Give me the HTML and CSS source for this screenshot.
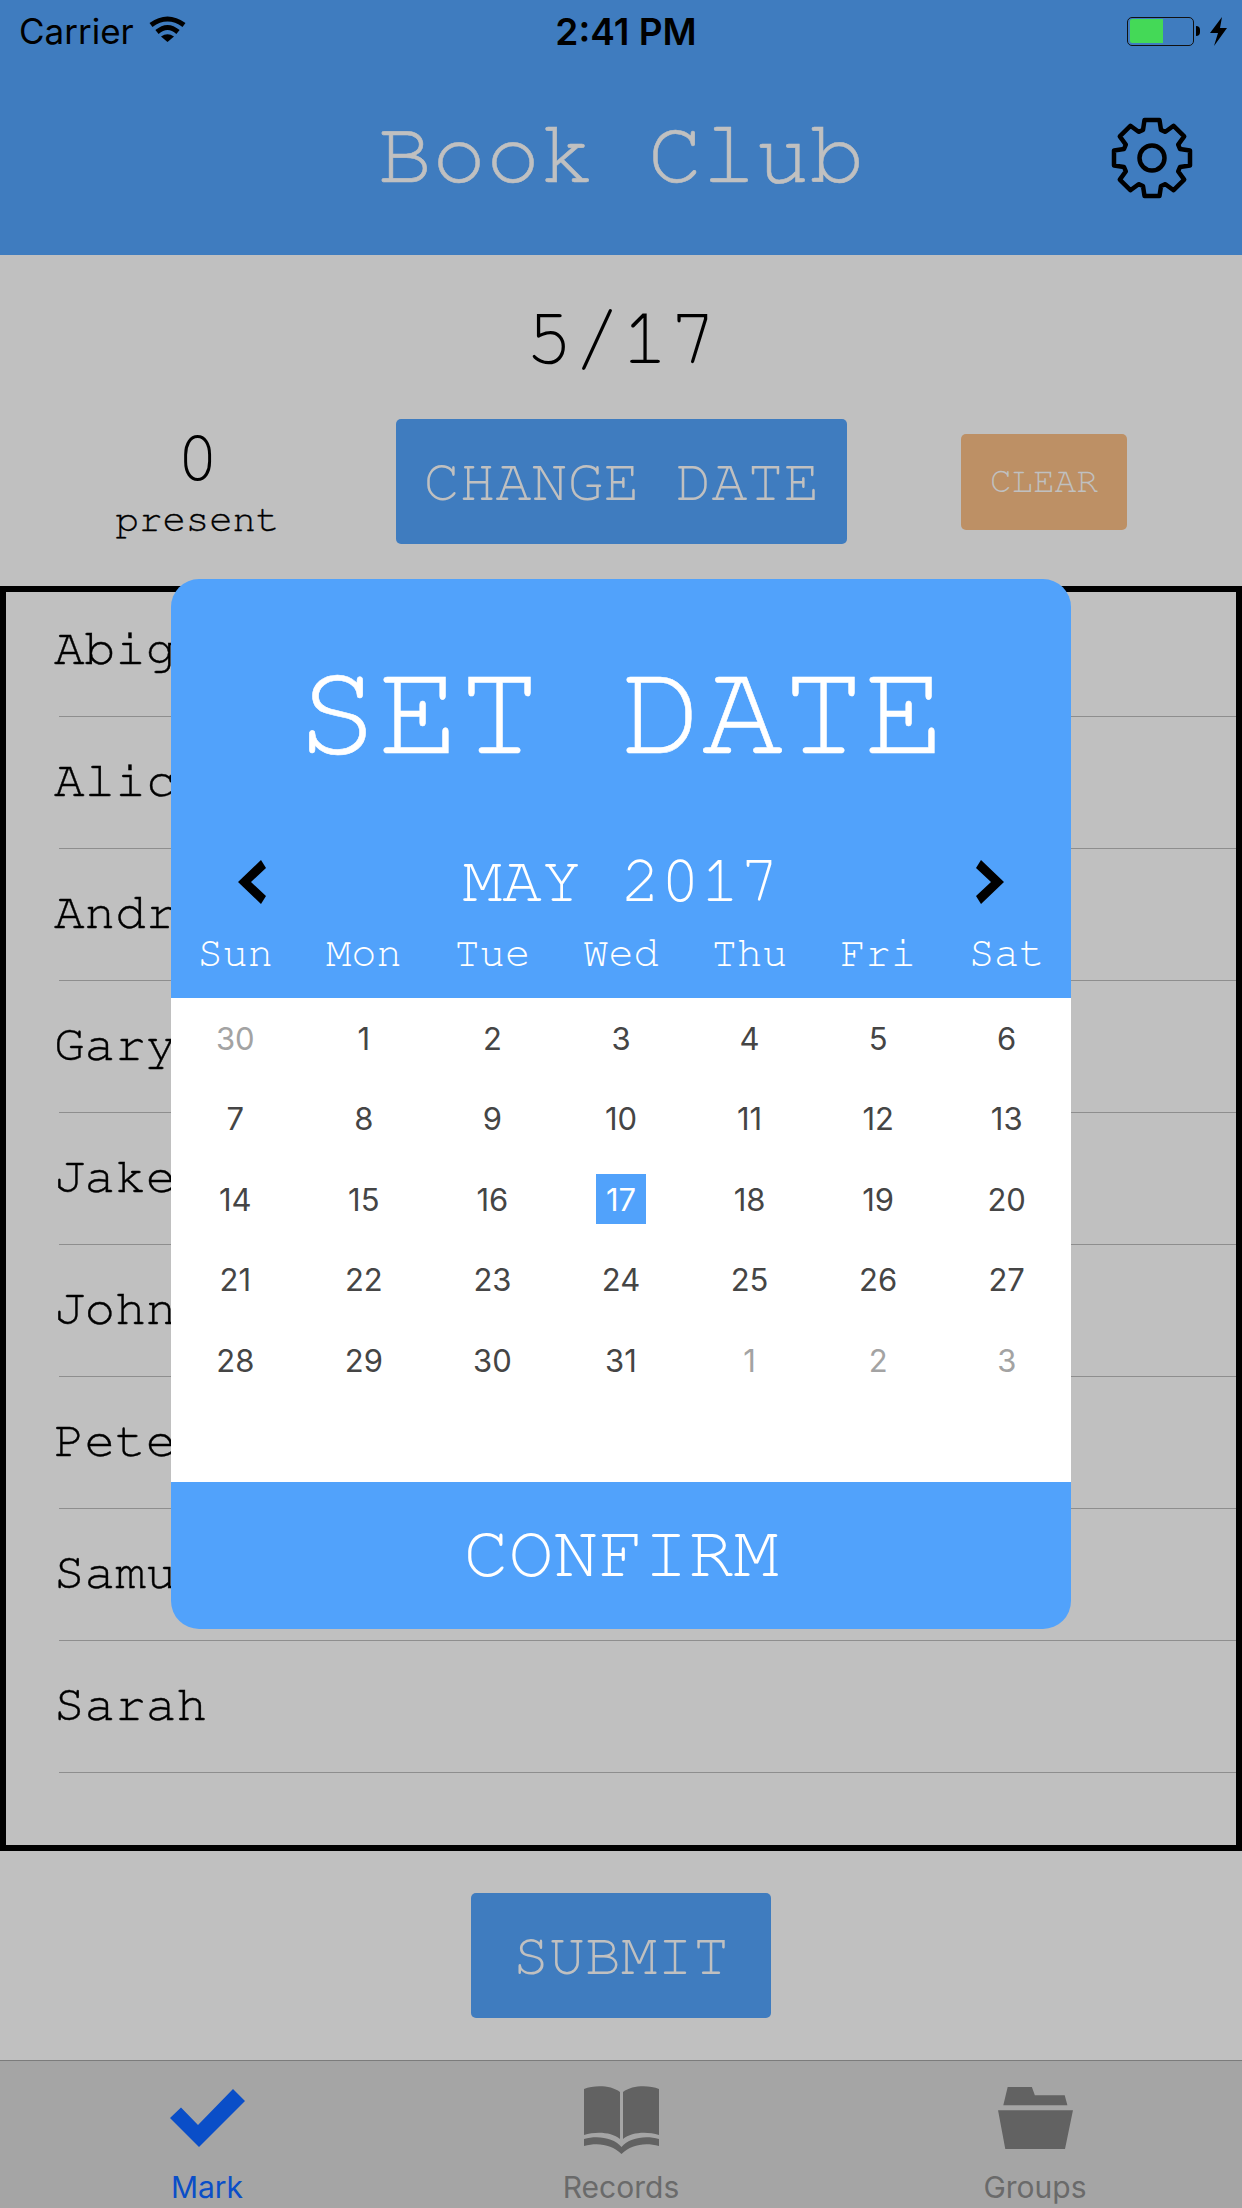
FILE: index.html
```html
<!DOCTYPE html>
<html lang="en">
<head>
<meta charset="utf-8">
<title>Book Club</title>
<link rel="stylesheet" href="styles.css">
</head>
<body>
<div class="app">
  <header class="header">
    <div class="status">
      <div class="status-left">
        <span>Carrier</span>
        <svg class="wifi" viewBox="0 0 37 26"><path d="M2 9Q18.500-3 35 9M8 16Q18.500 7 29 16" fill="none" stroke="#000" stroke-width="5"/><path d="M12 20.500Q18.500 16 25 20.500L18.500 26Z"/></svg>
      </div>
      <div class="status-time">2:41 PM</div>
      <div class="status-right">
        <div class="battery"><div class="battery-fill"></div></div>
        <div class="battery-cap"></div>
        <svg class="bolt" viewBox="0 0 17 29"><path d="M12 0L0 16H8L4 29L17 11H10Z"/></svg>
      </div>
    </div>
    <div class="title-row">
      <h1 class="title">Book Club</h1>
      <svg class="gear" viewBox="-41 -41 82 82"><path d="M-9-28L-7.500-38H7.500L9-28L13.400-26.200L21.600-32.200L32.200-21.600L26.200-13.400L28-9L38-7.500V7.500L28 9L26.200 13.400L32.200 21.600L21.600 32.200L13.400 26.200L9 28L7.500 38H-7.500L-9 28L-13.400 26.200L-21.600 32.200L-32.200 21.600L-26.200 13.400L-28 9L-38 7.500V-7.500L-28-9L-26.200-13.400L-32.200-21.600L-21.600-32.200L-13.400-26.200Z" fill="none" stroke="#000" stroke-width="4.500" stroke-linejoin="round"/><circle r="12.500" fill="none" stroke="#000" stroke-width="4.500"/></svg>
    </div>
  </header>

  <main class="main">
    <div class="date">5/17</div>
    <div class="controls">
      <div class="count">
        <div class="count-num">0</div>
        <div class="count-label">present</div>
      </div>
      <div class="btn btn-change">CHANGE DATE</div>
      <div class="btn btn-clear">CLEAR</div>
    </div>
    <div class="list">
      <div class="row">Abigail</div>
      <div class="row">Alice</div>
      <div class="row">Andrew</div>
      <div class="row">Gary</div>
      <div class="row">Jake</div>
      <div class="row">John</div>
      <div class="row">Peter</div>
      <div class="row">Samuel</div>
      <div class="row">Sarah</div>
    </div>
    <div class="submit-wrap"><div class="btn btn-submit">SUBMIT</div></div>
  </main>

  <nav class="tabs">
    <div class="tab tab-active">
      <svg class="icon-check" viewBox="0 0 75 58"><path d="M0 29L11 18.500L28 36L63 0L75 12L29 58Z" fill="#0a4ec8"/></svg>
      <span>Mark</span>
    </div>
    <div class="tab">
      <svg class="icon-book" viewBox="0 0 75 69"><path fill="#626262" d="M0 4C10 0 27 0 36 7V54C28 47 12 46 0 50ZM39 7C48 0 65 0 75 4V50C63 46 47 47 39 54ZM0 54C14 50 30 53 37.500 62C45 53 61 50 75 54V61C60 57 47 60 37.500 69C28 60 15 57 0 61Z"/></svg>
      <span>Records</span>
    </div>
    <div class="tab">
      <svg class="icon-folder" viewBox="0 0 75.300 62.300"><path fill="#626262" d="M9.700 0H34L37 8.300H67L69.700 18.300H5.300ZM0 23.300H75.300L67.300 62.300H7.300Z"/></svg>
      <span>Groups</span>
    </div>
  </nav>

  <div class="modal">
    <div class="modal-title">SET DATE</div>
    <div class="month-row">
      <svg class="chev" viewBox="0 0 28 44"><path d="M0 22L23 0L28 8L13 22L28 36L23 44Z"/></svg>
      <div class="month">MAY 2017</div>
      <svg class="chev" viewBox="0 0 28 44"><path d="M28 22L5 0L0 8L15 22L0 36L5 44Z"/></svg>
    </div>
    <div class="weekdays">
      <span>Sun</span><span>Mon</span><span>Tue</span><span>Wed</span><span>Thu</span><span>Fri</span><span>Sat</span>
    </div>
    <div class="cal">
      <span class="off">30</span><span>1</span><span>2</span><span>3</span><span>4</span><span>5</span><span>6</span>
      <span>7</span><span>8</span><span>9</span><span>10</span><span>11</span><span>12</span><span>13</span>
      <span>14</span><span>15</span><span>16</span><span class="sel"><b>17</b></span><span>18</span><span>19</span><span>20</span>
      <span>21</span><span>22</span><span>23</span><span>24</span><span>25</span><span>26</span><span>27</span>
      <span>28</span><span>29</span><span>30</span><span>31</span><span class="off">1</span><span class="off">2</span><span class="off">3</span>
    </div>
    <div class="confirm">CONFIRM</div>
  </div>
</div>
</body>
</html>
```
FILE: styles.css
```css
* { box-sizing: border-box; margin: 0; padding: 0; }
html, body { width: 1242px; height: 2208px; overflow: hidden; }
body { font-family: "Nimbus Mono PS", FreeMono, "Liberation Mono", monospace; background: #c0c0c0; }
.app { position: relative; width: 1242px; height: 2208px; display: flex; flex-direction: column; }

.header { height: 255px; background: #3f7cbf; display: flex; flex-direction: column; flex: none; }
.status { height: 60px; padding: 2px 15px 0 19px; display: flex; align-items: center; justify-content: space-between; position: relative; font-family: Inter, "Liberation Sans", sans-serif; font-size: 35px; color: #000; }
.status-left { display: flex; align-items: center; gap: 15px; }
.wifi { width: 37px; height: 26px; margin-top: -4px; }
.status-time { position: absolute; left: 10px; right: 0; text-align: center; font-weight: 600; font-size: 37px; }
.status-right { display: flex; align-items: center; }
.battery { width: 67px; height: 29px; border: 1.500px solid #111; border-radius: 5px; padding: 1.500px; }
.battery-fill { width: 33px; height: 100%; background: #44d957; border-radius: 2px 0 0 2px; }
.battery-cap { width: 4px; height: 10px; margin-left: 2px; background: #000; border-radius: 0 5px 5px 0; }
.bolt { width: 17px; height: 29px; margin-left: 10px; }
.title-row { flex: 1; position: relative; display: flex; align-items: center; justify-content: center; padding-bottom: 5px; }
.title { font-weight: 400; font-size: 90px; color: #c0c0c0; line-height: 1; -webkit-text-stroke: 0.6px #c0c0c0; }
.gear { position: absolute; right: 49px; top: 57px; width: 82px; height: 82px; }

.main { flex: 1; display: flex; flex-direction: column; }
.date { font-size: 80px; line-height: 86px; height: 164px; padding-top: 41px; text-align: center; color: #000; }
.controls { height: 167px; position: relative; display: flex; align-items: flex-start; }
.count { width: 394px; padding-left: 1px; text-align: center; color: #000; }
.count-num { font-size: 72px; line-height: 70px; margin-top: 4px; }
.count-label { font-size: 39px; line-height: 40px; margin-top: 7px; -webkit-text-stroke: 0.3px #000; }
.btn { background: #3f7cbf; color: #c0c0c0; border-radius: 5px; display: flex; align-items: center; justify-content: center; }
.btn-change { width: 451px; height: 125px; margin-left: 2px; font-size: 60px; flex: none; }
.btn-clear { width: 166px; height: 96px; margin-left: 114px; margin-top: 15px; padding-bottom: 2px; font-size: 36px; background: #bd9065; flex: none; }

.list { height: 1265px; border: 6px solid #000; display: flex; flex-direction: column; }
.row { height: 132px; margin-left: 53px; padding-top: 34px; text-indent: -5px; font-size: 51px; line-height: 60px; color: #000; border-bottom: 1px solid #8e8e8e; -webkit-text-stroke: 0.4px #000; }
.row:first-child { height: 125px; padding-top: 27px; }
.submit-wrap { flex: 1; display: flex; justify-content: center; padding-top: 42px; }
.btn-submit { width: 300px; height: 125px; font-size: 60px; }

.tabs { height: 148px; flex: none; background: #a5a5a5; border-top: 1px solid #7c7c7c; display: grid; grid-template-columns: repeat(3, 1fr); font-family: Inter, "Liberation Sans", sans-serif; font-size: 30px; color: #6a6a6a; }
.tab { display: flex; flex-direction: column; align-items: center; padding-top: 24px; position: relative; }
.icon-check { width: 75px; height: 58px; margin-top: 4px; }
.icon-book { width: 75px; height: 69px; }
.icon-folder { width: 75px; height: 62px; margin-top: 2px; }
.tab span { position: absolute; top: 108px; }
.tab-active { color: #0a4ec8; }

.modal { position: absolute; left: 171px; top: 579px; width: 900px; height: 1050px; border-radius: 28px; overflow: hidden; background: #51a2fb; display: flex; flex-direction: column; color: #fff; }
.modal-title { height: 271px; padding-bottom: 4px; display: flex; align-items: center; justify-content: center; font-size: 135px; -webkit-text-stroke: 0.6px #fff; }
.month-row { height: 64px; padding: 0 67px; display: flex; align-items: center; justify-content: space-between; }
.chev { width: 28px; height: 44px; }
.month { font-size: 66px; margin-top: -2px; }
.weekdays { height: 84px; padding-top: 17px; display: grid; grid-template-columns: repeat(7, 1fr); text-align: center; font-size: 42px; line-height: 44px; }
.cal { height: 484px; background: #fff; display: grid; grid-template-columns: repeat(7, 1fr); grid-auto-rows: 80.500px; align-content: start; font-family: Inter, "Liberation Sans", sans-serif; font-size: 31px; color: #454545; }
.cal span { display: flex; align-items: center; justify-content: center; }
.cal .off { color: #a3a3a3; }
.cal .sel { color: #fff; }
.cal .sel b { font-weight: 400; width: 50px; height: 50px; background: #51a2fb; display: flex; align-items: center; justify-content: center; }
.confirm { flex: 1; display: flex; align-items: center; justify-content: center; padding-bottom: 5px; font-size: 75px; }
```
